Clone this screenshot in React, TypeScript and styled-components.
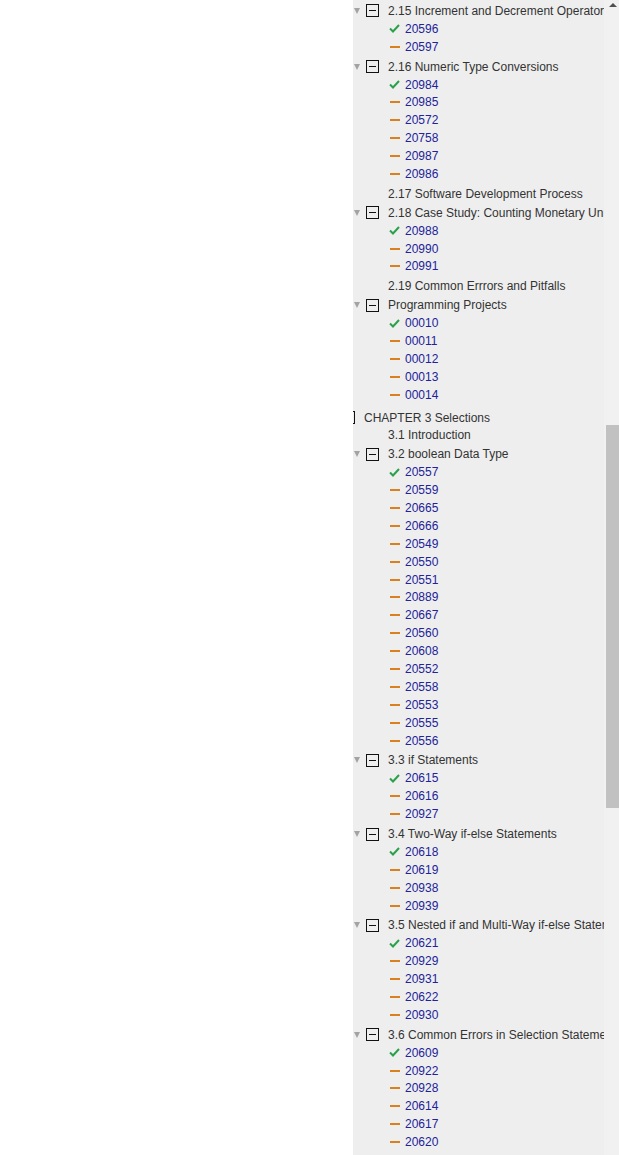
import React from 'react';
import styled, { createGlobalStyle } from 'styled-components';

const GlobalStyle = createGlobalStyle`
  html, body {
    margin: 0;
    padding: 0;
    background: #ffffff;
  }
  body {
    font-family: "Liberation Sans", Arial, sans-serif;
    font-size: 12px;
  }
`;

type Item =
  | { kind: 'chapter'; label: string }
  | { kind: 'section'; label: string; open?: boolean }
  | { kind: 'leaf'; id: string; done?: boolean };

const section = (label: string, ids: string[]): Item[] => [
  { kind: 'section', label, open: true },
  ...ids.map((id, i) => ({ kind: 'leaf' as const, id, done: i === 0 })),
];

const items: Item[] = [
  ...section('2.15 Increment and Decrement Operators', ['20596', '20597']),
  ...section('2.16 Numeric Type Conversions', ['20984', '20985', '20572', '20758', '20987', '20986']),
  { kind: 'section', label: '2.17 Software Development Process' },
  ...section('2.18 Case Study: Counting Monetary Units', ['20988', '20990', '20991']),
  { kind: 'section', label: '2.19 Common Errrors and Pitfalls' },
  ...section('Programming Projects', ['00010', '00011', '00012', '00013', '00014']),
  { kind: 'chapter', label: 'CHAPTER 3 Selections' },
  { kind: 'section', label: '3.1 Introduction' },
  ...section('3.2 boolean Data Type', [
    '20557', '20559', '20665', '20666', '20549', '20550', '20551', '20889',
    '20667', '20560', '20608', '20552', '20558', '20553', '20555', '20556',
  ]),
  ...section('3.3 if Statements', ['20615', '20616', '20927']),
  ...section('3.4 Two-Way if-else Statements', ['20618', '20619', '20938', '20939']),
  ...section('3.5 Nested if and Multi-Way if-else Statements', ['20621', '20929', '20931', '20622', '20930']),
  ...section('3.6 Common Errors in Selection Statements', ['20609', '20922', '20928', '20614', '20617', '20620']),
];

const Page = styled.div`
  display: flex;
  height: 1155px;
  overflow: hidden;
`;

const Blank = styled.div`
  width: 353px;
  flex-shrink: 0;
`;

const Panel = styled.aside`
  flex: 1;
  display: flex;
  background: #eeeeee;
  min-width: 0;
`;

const TreeArea = styled.div`
  flex: 1;
  min-width: 0;
  overflow: hidden;
  padding-top: 2px;
`;

const Tree = styled.ul`
  list-style: none;
  margin: 0 0 0 -24px;
  padding: 0;
`;

const Row = styled.li<{ $indent: number; $gap: number }>`
  display: flex;
  align-items: center;
  height: 17.9px;
  margin-top: ${(p) => p.$gap}px;
  padding-left: ${(p) => p.$indent}px;
  white-space: nowrap;
  color: #333333;
`;

const Toggle = styled.span`
  width: 0;
  height: 0;
  border-left: 3px solid transparent;
  border-right: 3px solid transparent;
  border-top: 6px solid #a3a3a3;
  margin-right: 6px;
  flex-shrink: 0;
`;

const Box = styled.span`
  position: relative;
  box-sizing: border-box;
  width: 13px;
  height: 13px;
  border: 1px solid #111111;
  margin-right: 9px;
  flex-shrink: 0;

  &::after {
    content: '';
    position: absolute;
    left: 2px;
    right: 2px;
    top: 5px;
    height: 1px;
    background: #111111;
  }
`;

const Label = styled.span`
  color: #333333;
`;

const Status = styled.span`
  display: inline-flex;
  align-items: center;
  justify-content: center;
  width: 11px;
  margin-right: 5px;
  flex-shrink: 0;
`;

const Dash = styled.span`
  display: block;
  width: 10px;
  height: 2px;
  background: #d9801f;
`;

const Link = styled.a`
  color: #22229a;
  text-decoration: none;
  cursor: pointer;
`;

const Scrollbar = styled.div`
  width: 15px;
  flex-shrink: 0;
  background: #f1f1f1;
  display: flex;
  flex-direction: column;
  align-items: flex-end;
`;

const Arrow = styled.span`
  align-self: center;
  margin-top: 3px;
  margin-left: 2px;
  width: 0;
  height: 0;
  border-left: 4px solid transparent;
  border-right: 4px solid transparent;
  border-bottom: 4px solid #505050;
`;

const Thumb = styled.div`
  width: 13px;
  height: 383px;
  margin-top: 418px;
  background: #c1c1c1;
`;

const Check = () => (
  <svg width="11" height="9" viewBox="0 0 11 9">
    <polyline points="1,4.5 4,7.5 10,1" fill="none" stroke="#2aa14a" strokeWidth="2" />
  </svg>
);

export default function App() {
  return (
    <>
      <GlobalStyle />
      <Page>
        <Blank />
        <Panel>
          <TreeArea>
            <Tree>
              {items.map((item, i) => {
                const prev = items[i - 1];
                if (item.kind === 'chapter') {
                  return (
                    <Row key={i} $indent={1} $gap={5}>
                      <Toggle />
                      <Box />
                      <Label>{item.label}</Label>
                    </Row>
                  );
                }
                if (item.kind === 'section') {
                  const gap = !prev ? 0 : prev.kind === 'leaf' ? 2 : prev.kind === 'section' ? 1 : 0;
                  return item.open ? (
                    <Row key={i} $indent={25} $gap={gap}>
                      <Toggle />
                      <Box />
                      <Label>{item.label}</Label>
                    </Row>
                  ) : (
                    <Row key={i} $indent={59} $gap={gap}>
                      <Label>{item.label}</Label>
                    </Row>
                  );
                }
                return (
                  <Row key={i} $indent={60} $gap={0}>
                    <Status>{item.done ? <Check /> : <Dash />}</Status>
                    <Link>{item.id}</Link>
                  </Row>
                );
              })}
            </Tree>
          </TreeArea>
          <Scrollbar>
            <Arrow />
            <Thumb />
          </Scrollbar>
        </Panel>
      </Page>
    </>
  );
}
